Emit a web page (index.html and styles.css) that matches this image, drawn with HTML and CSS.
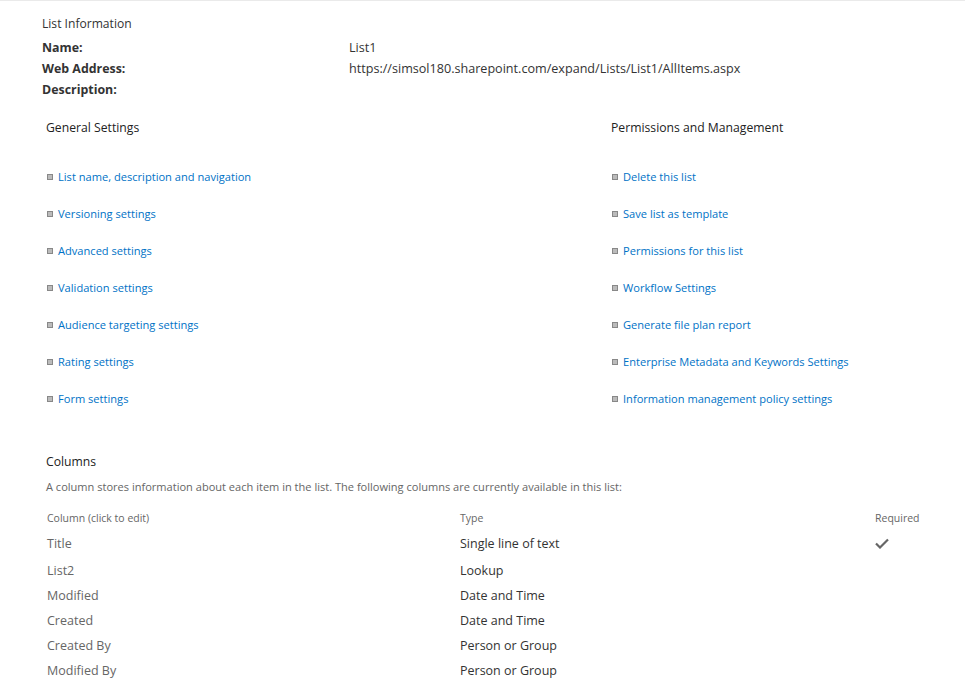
FILE: index.html
```html
<!DOCTYPE html>
<html>
<head>
<meta charset="utf-8">
<link rel="stylesheet" href="styles.css">
</head>
<body>
<div class="page">
  <section class="info">
    <h2 class="info-title">List Information</h2>
    <div class="info-grid">
      <div class="label">Name:</div><div class="value">List1</div>
      <div class="label">Web Address:</div><div class="value">https://simsol180.sharepoint.com/expand/Lists/List1/AllItems.aspx</div>
      <div class="label">Description:</div><div class="value"></div>
    </div>
  </section>

  <section class="settings">
    <div class="settings-col">
      <h3 class="section-title">General Settings</h3>
      <ul class="links">
        <li><a href="#">List name, description and navigation</a></li>
        <li><a href="#">Versioning settings</a></li>
        <li><a href="#">Advanced settings</a></li>
        <li><a href="#">Validation settings</a></li>
        <li><a href="#">Audience targeting settings</a></li>
        <li><a href="#">Rating settings</a></li>
        <li><a href="#">Form settings</a></li>
      </ul>
    </div>
    <div class="settings-col">
      <h3 class="section-title">Permissions and Management</h3>
      <ul class="links">
        <li><a href="#">Delete this list</a></li>
        <li><a href="#">Save list as template</a></li>
        <li><a href="#">Permissions for this list</a></li>
        <li><a href="#">Workflow Settings</a></li>
        <li><a href="#">Generate file plan report</a></li>
        <li><a href="#">Enterprise Metadata and Keywords Settings</a></li>
        <li><a href="#">Information management policy settings</a></li>
      </ul>
    </div>
  </section>

  <section class="columns">
    <h3 class="section-title">Columns</h3>
    <p class="columns-desc">A column stores information about each item in the list. The following columns are currently available in this list:</p>
    <div class="col-table">
      <div class="col-head">Column (click to edit)</div><div class="col-head">Type</div><div class="col-head">Required</div>
      <div class="col-name first">Title</div><div class="col-type first">Single line of text</div><div class="col-req first"><svg class="check" width="14" height="11" viewBox="0 0 14 11"><path d="M1 5.5 L5 9.5 L13 1.5" fill="none" stroke="#666" stroke-width="2.2"/></svg></div>
      <div class="col-name">List2</div><div class="col-type">Lookup</div><div class="col-req"></div>
      <div class="col-name">Modified</div><div class="col-type">Date and Time</div><div class="col-req"></div>
      <div class="col-name">Created</div><div class="col-type">Date and Time</div><div class="col-req"></div>
      <div class="col-name">Created By</div><div class="col-type">Person or Group</div><div class="col-req"></div>
      <div class="col-name">Modified By</div><div class="col-type">Person or Group</div><div class="col-req"></div>
    </div>
  </section>
</div>
</body>
</html>
```

FILE: styles.css
```css
html, body {
  margin: 0;
  padding: 0;
  background: #fff;
}
body {
  font-family: "Open Sans", "Noto Sans", sans-serif;
  color: #333;
  border-top: 1px solid #eaeaea;
}
.page {
  padding: 14px 0 0 42px;
}
.info-title {
  margin: 0;
  font-size: 12.1px;
  font-weight: 400;
  line-height: 17px;
  color: #333;
}
.info-grid {
  display: grid;
  grid-template-columns: 307px 1fr;
  margin-top: 5px;
  line-height: 21px;
}
.label {
  font-weight: 700;
  font-size: 12.4px;
  color: #333;
}
.value {
  color: #333;
  font-size: 12.6px;
  min-height: 21px;
}
.settings {
  display: grid;
  grid-template-columns: 565px 1fr;
  margin-top: 19px;
  padding-left: 4px;
}
.section-title {
  margin: 0;
  font-size: 12.2px;
  font-weight: 400;
  line-height: 18px;
  color: #222;
}
.links {
  list-style: none;
  margin: 21px 0 0;
  padding: 0;
}
.links li {
  display: flex;
  align-items: center;
  height: 37px;
  font-size: 11.1px;
}
.links li::before {
  content: "";
  width: 4px;
  height: 4px;
  border: 1px solid #888;
  background: #bbb;
  margin: 0 5px 0 1px;
  flex: none;
}
.links a {
  color: #0072c6;
  text-decoration: none;
}
.columns {
  margin-top: 36px;
  padding-left: 4px;
}
.columns-desc {
  margin: 7px 0 0;
  font-size: 11.05px;
  color: #666;
  line-height: 18px;
}
.col-table {
  display: grid;
  grid-template-columns: 413px 415px 1fr;
  margin-top: 13px;
  padding-left: 1px;
  font-size: 12.5px;
  line-height: 25px;
}
.col-head {
  font-size: 10.5px;
  color: #666;
  line-height: 18px;
  margin-bottom: 2px;
}
.col-name {
  color: #666;
}
.col-type {
  color: #333;
}
.first {
  padding-top: 2px;
  padding-bottom: 2px;
}
.col-req {
  display: flex;
  align-items: center;
}
.check {
  display: block;
}
```
